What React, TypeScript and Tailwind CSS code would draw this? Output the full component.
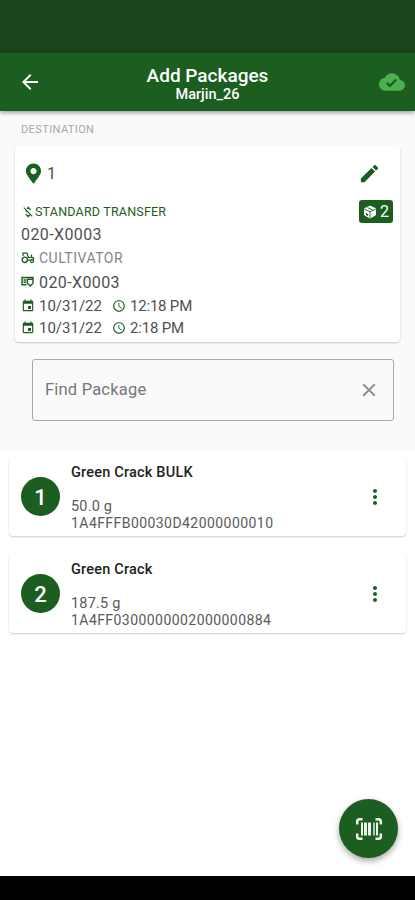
import { FaMapMarkerAlt } from "react-icons/fa";
import {
  MdArrowBack,
  MdClose,
  MdCloudDone,
  MdEdit,
  MdEvent,
  MdMoneyOff,
  MdMoreVert,
  MdSchedule,
} from "react-icons/md";

const packages = [
  { id: 1, name: "Green Crack BULK", weight: "50.0 g", tag: "1A4FFFB00030D42000000010" },
  { id: 2, name: "Green Crack", weight: "187.5 g", tag: "1A4FF0300000002000000884" },
];

const schedule = [
  { date: "10/31/22", time: "12:18 PM" },
  { date: "10/31/22", time: "2:18 PM" },
];

const BarcodeScan = () => (
  <svg width="28" height="24" viewBox="0 0 28 24" fill="none" stroke="#eef5ee">
    <path d="M2.200 7.500V4.500Q2.200 2.200 4.500 2.200H7.500M20.500 2.200H23.500Q25.800 2.200 25.800 4.500V7.500M25.800 16.500V19.500Q25.800 21.800 23.500 21.800H20.500M7.500 21.800H4.500Q2.200 21.800 2.200 19.500V16.500" strokeWidth="2.500" />
    <path d="M7 5.500V18.500" strokeWidth="2" />
    <path d="M10.500 5.500V18.500M14.500 5.500V18.500" strokeWidth="3" />
    <path d="M19 5.500V18.500" strokeWidth="1.400" />
    <path d="M22 5.500V18.500" strokeWidth="2" />
  </svg>
);

const Tractor = () => (
  <svg width="14" height="12" viewBox="0 0 14 12" fill="none" stroke="#1b5e20">
    <circle cx="3.800" cy="7.800" r="2.700" strokeWidth="1.300" />
    <path d="M2 4V1.200H6L7.500 5.500H12.500V8" strokeWidth="1.200" />
    <path d="M6.500 8.200H9.500M10.500 5V2.500" strokeWidth="1.300" />
    <circle cx="11" cy="9" r="1.500" strokeWidth="1.300" />
  </svg>
);

const License = () => (
  <svg width="13" height="12" viewBox="0 0 13 12" fill="none" stroke="#1b5e20" strokeWidth="1.400">
    <path d="M5.500 8.700H1V1.500H12V3M2.500 4H5M2.500 6.200H5" />
    <path d="M6.300 3.300H12V7.200L9.200 10L6.300 7.200Z" />
  </svg>
);

const PackageCube = () => (
  <svg width="14" height="14" viewBox="0 0 14 14">
    <path d="M7 1L12.500 3.700V10L7 13L1.500 10V3.700Z" fill="#fff" stroke="#fff" strokeLinejoin="round" />
    <path d="M1.500 4.200L7 6.700L12.500 4.200M7 6.700V13M4.500 2.500L9.700 5" stroke="#1b5e20" strokeWidth=".9" fill="none" />
    <path d="M3 8V10L5 11V9Z" fill="#1b5e20" />
  </svg>
);

const Header = () => (
  <header className="relative z-10 flex h-[58px] items-center bg-[#1b5e20] text-white shadow-[0_2px_4px_rgba(0,0,0,0.35)]">
    <div className="flex w-[60px] justify-center">
      <MdArrowBack className="h-6 w-6" />
    </div>
    <div className="flex flex-1 flex-col items-center pt-[3px] text-center">
      <h1 className="text-[19px] leading-[21px] font-medium">Add Packages</h1>
      <p className="text-[14.500px] leading-[17px] font-medium">Marjin_26</p>
    </div>
    <div className="flex w-[60px] justify-end pr-[10px]">
      <MdCloudDone className="h-[26px] w-[26px] text-[#4caf50]" />
    </div>
  </header>
);

const Destination = () => (
  <section className="mx-[15px] h-[196px] rounded bg-white pl-[6px] text-[#505050] shadow-[0_1px_2px_rgba(0,0,0,0.22)]">
    <div className="flex h-[54px] items-center pt-px pr-[20px]">
      <FaMapMarkerAlt className="ml-[5px] h-[21px] w-[15px] text-[#1b5e20]" />
      <span className="ml-[6px] text-[16px]">1</span>
      <MdEdit className="-mr-px ml-auto h-[23px] w-[23px] text-[#1b5e20]" />
    </div>
    <div className="flex h-[23px] items-center pr-[7px] text-[#1b5e20]">
      <MdMoneyOff className="h-[14px] w-[14px]" />
      <span className="pt-px text-[12.500px] tracking-[0.2px]">STANDARD TRANSFER</span>
      <div className="ml-auto flex h-[23px] w-[34px] items-center justify-center gap-[3px] rounded-[3px] bg-[#1b5e20] text-[16px] text-white">
        <PackageCube />
        <span>2</span>
      </div>
    </div>
    <div className="h-[23px] text-[16px] leading-[23px] tracking-[0.4px]">020-X0003</div>
    <div className="flex h-6 items-center text-[#858585]">
      <Tractor />
      <span className="ml-[4px] text-[14px] tracking-[0.5px]">CULTIVATOR</span>
    </div>
    <div className="flex h-6 items-center">
      <License />
      <span className="ml-[5px] pt-px text-[16px] tracking-[0.4px]">020-X0003</span>
    </div>
    {schedule.map((item) => (
      <div key={item.time} className="flex h-[22.500px] items-center pt-px text-[15px]">
        <MdEvent className="h-[14px] w-[14px] text-[#1b5e20]" />
        <span className="ml-[4px] w-[63px]">{item.date}</span>
        <MdSchedule className="ml-[10px] h-[14px] w-[14px] text-[#1b5e20]" />
        <span className="ml-[4px] tracking-[-0.2px]">{item.time}</span>
      </div>
    ))}
  </section>
);

const App = () => {
  return (
    <div className="flex h-[900px] w-[415px] flex-col overflow-hidden bg-white font-['Roboto',sans-serif]">
      {/* Status bar */}
      <div className="h-[53px] shrink-0 bg-[#1a451a]" />
      <Header />

      <div className="h-[341px] shrink-0 bg-[#fafafa]">
        <div className="flex h-[35px] items-center pt-[3px] pl-[21px] text-[11px] tracking-[0.4px] text-[#a8a8a8]">DESTINATION</div>
        <Destination />
        {/* Search field */}
        <div className="mt-[17px] mr-[21px] ml-[32px] flex h-[62px] items-center rounded-[3px] border border-[#a8a8a8] pr-[13px] pl-[12px]">
          <input
            placeholder="Find Package"
            className="min-w-0 flex-1 bg-transparent text-[16.500px] tracking-[0.2px] outline-none placeholder:text-[#777]"
          />
          <MdClose className="h-[22px] w-[22px] text-[#8a8a8a]" />
        </div>
      </div>

      {/* Package list */}
      <main className="flex flex-1 flex-col gap-[18px] pt-[5px] pr-[9px] pl-[9px]">
        {packages.map((item) => (
          <article key={item.id} className="flex h-[79px] items-center rounded bg-white pr-[19px] pl-[12px] shadow-[0_1px_2px_rgba(0,0,0,0.2)]">
            <div className="flex h-[39px] w-[39px] items-center justify-center rounded-full bg-[#1b5e20] pt-px text-[22px] font-medium text-white">
              {item.id}
            </div>
            <div className="ml-[11px] flex-1 self-start pt-[7px] text-[#5a5a5a]">
              <h2 className="text-[14.500px] leading-[18px] font-medium tracking-[0.2px] text-[#222]">{item.name}</h2>
              <p className="mt-[16px] text-[14.500px] leading-[17px] tracking-[0.2px]">{item.weight}</p>
              <p className="text-[14px] leading-[17px] tracking-[0.440px]">{item.tag}</p>
            </div>
            <MdMoreVert className="h-6 w-6 text-[#1b5e20]" />
          </article>
        ))}
        <button className="mt-auto mr-[8px] mb-[18px] flex h-[59px] w-[59px] items-center justify-center self-end rounded-full bg-[#1b5e20] shadow-[0_3px_6px_rgba(0,0,0,0.35)]">
          <BarcodeScan />
        </button>
      </main>

      {/* Navigation bar */}
      <div className="h-6 shrink-0 bg-black" />
    </div>
  );
};

export default App;
